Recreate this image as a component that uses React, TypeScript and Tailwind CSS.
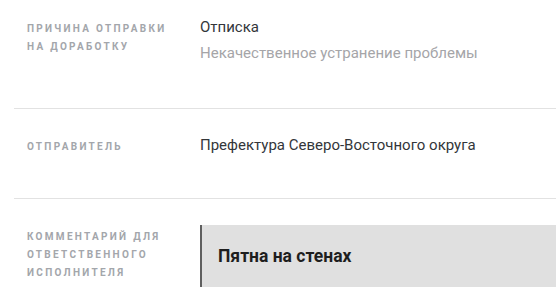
export default function App() {
  return (
    <div className="w-[556px] h-[308px] overflow-hidden bg-white pl-[14px] font-['Roboto',sans-serif]">
      {/* Reason */}
      <div className="flex items-baseline border-b border-[#e2e2e2] pt-[16px] pb-[43px] pl-[13px]">
        <div className="w-[173px] shrink-0 text-[10px] leading-[18px] font-bold uppercase tracking-[2.3px] text-[#a3a6ab]">
          Причина отправки
          <br />
          на доработку
        </div>
        <div className="text-[15px] leading-[23px]">
          <div className="text-[#33363a]">Отписка</div>
          <div className="mt-[3px] text-[#a5a5a8]">Некачественное устранение проблемы</div>
        </div>
      </div>

      {/* Sender */}
      <div className="flex items-baseline border-b border-[#e2e2e2] pt-[25px] pb-[41px] pl-[13px]">
        <div className="w-[173px] shrink-0 text-[10px] leading-[18px] font-bold uppercase tracking-[2.3px] text-[#a3a6ab]">
          Отправитель
        </div>
        <div className="text-[15px] leading-[23px] text-[#33363a]">
          Префектура Северо-Восточного округа
        </div>
      </div>

      {/* Comment */}
      <div className="flex items-start pt-[26px] pl-[13px]">
        <div className="w-[173px] shrink-0 pt-[3px] text-[10px] leading-[18px] font-bold uppercase tracking-[2.3px] text-[#a3a6ab]">
          Комментарий для
          <br />
          ответственного
          <br />
          исполнителя
        </div>
        <div className="flex-1 h-[62px] flex items-center border-l-2 border-[#5f5f5f] bg-[#e0e0e0] pl-[16px]">
          <span className="text-[17.5px] font-bold text-[#1e1e1e]">Пятна на стенах</span>
        </div>
      </div>
    </div>
  );
}
